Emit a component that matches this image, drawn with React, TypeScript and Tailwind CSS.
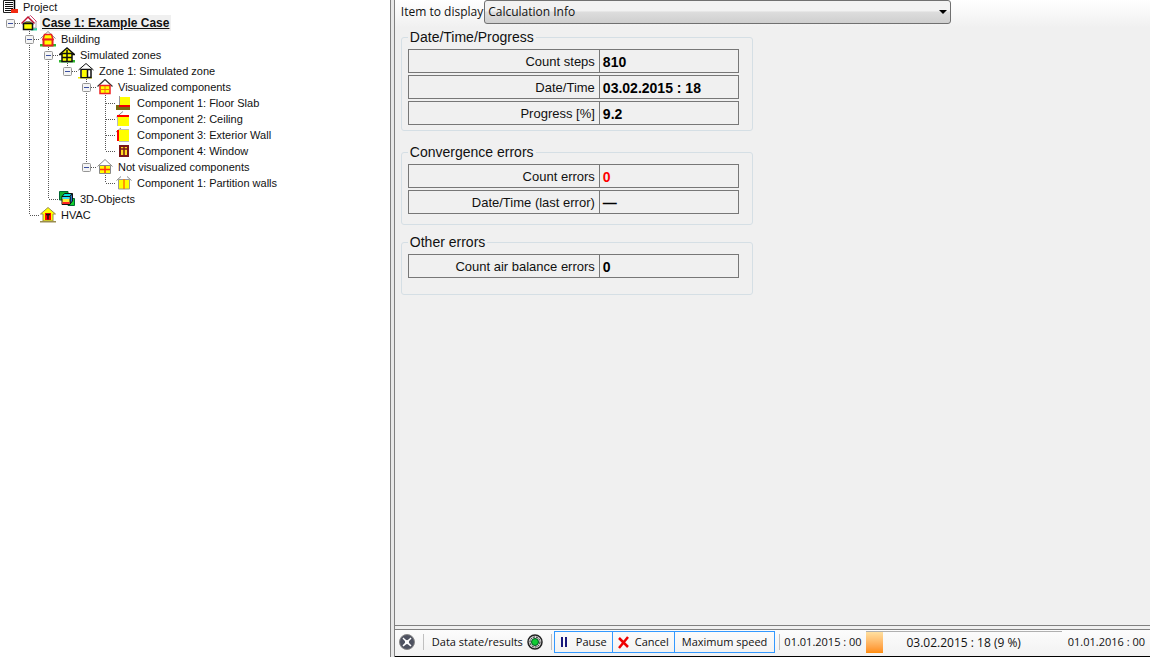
import type { ReactNode } from "react";

// Every tree icon is drawn on a 16x16 pixel grid
const icons: Record<string, ReactNode> = {
  project: (
    <>
      <path d="M0.500 0.500H11.500V12.500H0.500Z" fill="#fff" stroke="#222" />
      <path d="M2 2.500H10M2 4.500H10M2 6.500H10M2 8.500H10M2 10.500H8" stroke="#111" />
      <path d="M11.500 0V9" stroke="#000" strokeWidth="1.500" />
      <path d="M8 9H15V13H8Z" fill="#f22b12" />
    </>
  ),
  case: (
    <>
      <path d="M10 15.500H16V13H10Z" fill="#35d6a5" />
      <path d="M6.500 3L9.500 0.500L15 6V13H11V8Z" fill="#fff" stroke="#b0a0a8" />
      <path d="M9.500 0.500L15.500 6.500" stroke="#d04070" />
      <path d="M0.500 8.500L7 2L13.500 8.500" fill="#fff" stroke="#c01030" strokeWidth="1.500" />
      <path d="M2 9.500L4.500 7H9.500L12 9.500" fill="#ff0" stroke="#111" />
      <path d="M2.500 8.500H11.500V14.500H2.500Z" fill="#ff0" stroke="#111" strokeWidth="1.500" />
    </>
  ),
  building: (
    <>
      <path d="M0 13H16V15.500H0Z" fill="#2fb82f" />
      <path d="M0.500 7.500L8 0.500L15.500 7.500" fill="#fff" stroke="#888" />
      <path d="M3 8.500L4.500 3.500H11.500L13 8.500Z" fill="#ff0" stroke="#e82020" strokeWidth="1.500" />
      <path d="M3.500 8.500H12.500V14.500H3.500Z" fill="#ff0" stroke="#e82020" strokeWidth="2" />
    </>
  ),
  zones: (
    <>
      <path d="M0 13H16V15.500H0Z" fill="#2fb82f" />
      <path d="M0.500 7.500L8 1L15.500 7.500Z" fill="#ff0" stroke="#111" strokeWidth="1.500" />
      <path d="M3 6.500H13V14.500H3Z" fill="#ff0" stroke="#111" strokeWidth="1.500" />
      <path d="M8 3V15M3 10.500H13" stroke="#111" strokeWidth="1.500" />
    </>
  ),
  zone: (
    <>
      <path d="M0 14H14V15.500H0Z" fill="#ee0" />
      <path d="M0.500 7L8 0.500L15.500 7" fill="#fff" stroke="#111" />
      <path d="M3 6.500H13V14.500H3Z" fill="#fff" stroke="#111" strokeWidth="1.500" />
      <path d="M4 7H9V14H4Z" fill="#ff0" />
      <path d="M9.500 6V14" stroke="#111" strokeWidth="1.500" />
    </>
  ),
  visualized: (
    <>
      <path d="M0.500 7.500L8 0.500L15.500 7.500" fill="#fff" stroke="#333" strokeWidth="1.200" />
      <path d="M3 6.500H13V14.500H3Z" fill="#ff0" stroke="#f02020" strokeWidth="1.500" />
      <path d="M8 7V14M3 10.500H13" stroke="#f96a10" />
    </>
  ),
  hidden: (
    <>
      <path d="M0.500 7.500L8 0.500L15.500 7.500" fill="#fff" stroke="#888" />
      <path d="M2.500 6.500H13.500V14.500H2.500Z" fill="#ff0" stroke="#888" />
      <path d="M8 7V14M3 10.500H13" stroke="#f31" strokeWidth="1.500" />
    </>
  ),
  floor: (
    <>
      <path d="M3.500 1V11" stroke="#999" />
      <path d="M0 10H14V15H0Z" fill="#7a6a10" />
      <path d="M4 2H14V10H4Z" fill="#ff0" />
      <path d="M3 10H14V12H3Z" fill="#e00" />
    </>
  ),
  ceiling: (
    <>
      <path d="M0.500 6L7 0.500" stroke="#888" />
      <path d="M2 6H13V15H2Z" fill="#ff0" />
      <path d="M1 4H13V6H1Z" fill="#f00" />
      <path d="M1.500 6V15" stroke="#bbb" />
    </>
  ),
  wall: (
    <>
      <path d="M0 5L5 1" stroke="#888" />
      <path d="M3 3H13V14H3Z" fill="#ff0" />
      <path d="M1 3H3V14H1Z" fill="#f00" />
      <path d="M3 2.500H13M3 14.500H13" stroke="#bbb" />
    </>
  ),
  window: (
    <>
      <path d="M4 3H12V13H4Z" fill="#fd2" stroke="#7a1518" strokeWidth="2" />
      <path d="M8 3V13M4 6H12" stroke="#7a1518" strokeWidth="1.500" />
    </>
  ),
  partition: (
    <>
      <path d="M0.500 5.500L5 1.500M11 1.500L15.500 5.500" stroke="#888" />
      <path d="M2.500 4.500H13.500V14H2.500Z" fill="#ff0" stroke="#999" />
      <path d="M8 4V14" stroke="#f70" strokeWidth="1.500" />
    </>
  ),
  objects: (
    <>
      <path d="M0.500 0.500H9V9H0.500Z" fill="#10b030" stroke="#063" />
      <path d="M9 7.500H15.500V14.500H9Z" fill="#10d030" stroke="#063" />
      <path d="M3 5.500L5.500 2.500H13L11 5.500Z" fill="#0dd" stroke="#111" />
      <path d="M11 5.500L13.500 2.500V10L11 13Z" fill="#27c" stroke="#111" />
      <path d="M3 5.500H11V13.500H3Z" fill="#fe3" stroke="#111" />
      <path d="M3.500 6H10.500V8H3.500Z" fill="#3df" />
      <path d="M3.500 11H10.500V13H3.500Z" fill="#f22" />
    </>
  ),
  hvac: (
    <>
      <path d="M0 14H16V15.500H0Z" fill="#998c50" />
      <path d="M0.500 7L8 0.500L15.500 7H13V14H3V7Z" fill="#ff0" stroke="#998c50" />
      <path d="M5 6H11V13H5Z" fill="#f00" />
      <path d="M6 7.500H10M8 7V12.500" stroke="#111" strokeWidth="1.500" />
    </>
  ),
};

// Guides, one letter per indent column:
// " " empty, "|" line passing by, "t" branch, "l" last branch, "0" root box, "+" node box going on, "-" last node box
const nodes = [
  { label: "Case 1: Example Case", icon: "case", guides: "0" },
  { label: "Building", icon: "building", guides: " +" },
  { label: "Simulated zones", icon: "zones", guides: " |+" },
  { label: "Zone 1: Simulated zone", icon: "zone", guides: " ||-" },
  { label: "Visualized components", icon: "visualized", guides: " || +" },
  { label: "Component 1: Floor Slab", icon: "floor", guides: " || |t" },
  { label: "Component 2: Ceiling", icon: "ceiling", guides: " || |t" },
  { label: "Component 3: Exterior Wall", icon: "wall", guides: " || |t" },
  { label: "Component 4: Window", icon: "window", guides: " || |l" },
  { label: "Not visualized components", icon: "hidden", guides: " || -" },
  { label: "Component 1: Partition walls", icon: "partition", guides: " ||  l" },
  { label: "3D-Objects", icon: "objects", guides: " |l" },
  { label: "HVAC", icon: "hvac", guides: " l" },
];

const TreeIcon = ({ name }: { name: string }) => (
  <svg width="16" height="16" viewBox="0 0 16 16" fill="none" className="shrink-0" aria-hidden="true">
    {icons[name]}
  </svg>
);

const Guide = ({ kind }: { kind: string }) => {
  const box = "0+-".includes(kind);
  const down = "|t+".includes(kind);
  const up = "|tl+-".includes(kind);
  return (
    <svg width="19" height="16" viewBox="0 0 19 16" fill="none" className="shrink-0" aria-hidden="true">
      <g stroke="#555" strokeDasharray="1 1">
        {up && <path d="M9.500 0V8" />}
        {down && <path d="M9.500 8V16" />}
        {kind !== " " && kind !== "|" && <path d="M10 8.500H19" />}
      </g>
      {box && (
        <>
          <rect x="5.500" y="4.500" width="8" height="8" rx="1" fill="#f4f4f4" stroke="#969696" />
          <path d="M7 8.500H12" stroke="#3c50a0" />
        </>
      )}
    </svg>
  );
};

const Tree = () => (
  <nav className="w-[33.9%] shrink-0 overflow-hidden bg-white pl-px font-['Liberation_Sans',sans-serif] text-[11px] whitespace-nowrap">
    <div className="flex h-[15px] items-center gap-1 pl-0.5">
      <TreeIcon name="project" />
      <span>Project</span>
    </div>
    <ul>
      {nodes.map((node) => (
        <li key={node.label} className="flex h-4 items-center">
          {node.guides.split("").map((kind, i) => (
            <Guide key={i} kind={kind} />
          ))}
          <span className="pl-px"><TreeIcon name={node.icon} /></span>
          {node.icon === "case" ? (
            <a href="#case" className="ml-[3px] bg-[#f0f0f0] px-0.5 text-[12px] leading-4 font-bold underline">{node.label}</a>
          ) : (
            <span className="ml-[5px]">{node.label}</span>
          )}
        </li>
      ))}
    </ul>
  </nav>
);

type Row = { label: string; value: string; className?: string };

const Group = ({ title, rows, className }: { title: string; rows: Row[]; className: string }) => (
  <fieldset className={`w-[352px] rounded-[3px] border border-[#d5dfe5] px-1.5 pt-1 ${className}`}>
    <legend className="px-0.5 text-[14px] leading-4">{title}</legend>
    <table className="w-[331px] border-separate border-spacing-0">
      <tbody>
        {rows.map((row) => (
          <tr key={row.label}>
            <th scope="row" className="w-[192px] pb-0.5 font-normal">
              <div className="h-6 border border-[#777] pr-1 text-right text-[13px] leading-6">{row.label}</div>
            </th>
            <td className="pb-0.5">
              <div className={`h-6 border border-l-0 border-[#777] pl-[3px] text-[14px] leading-6 font-bold ${row.className ?? "text-black"}`}>{row.value}</div>
            </td>
          </tr>
        ))}
      </tbody>
    </table>
  </fieldset>
);

const App = () => {
  return (
    <div className="flex h-screen overflow-hidden bg-[#f0f0f0] text-[#111]">
      <Tree />
      <div className="w-[5px] shrink-0 border-x border-[#808080] bg-[#e8e8e8]" />
      <main className="flex min-w-0 flex-1 flex-col">
        <section className="flex-1 border-b border-[#808080] bg-linear-to-b from-white to-[#f0f0f0] to-[28px] pl-1.5 font-['Liberation_Sans',sans-serif]">
          <div className="flex h-6 items-center gap-px font-['Open_Sans',sans-serif] text-[12px]">
            <label htmlFor="item">Item to display</label>
            <div className="relative w-[467px]">
              <select id="item" className="block h-6 w-full appearance-none rounded-[3px] border border-[#707070] bg-linear-to-b from-[#f2f2f2] from-45% via-[#dddddd] via-50% to-[#cfcfcf] px-[3px]">
                <option>Calculation Info</option>
              </select>
              <svg width="8" height="4" viewBox="0 0 8 4" className="pointer-events-none absolute top-2.5 right-1" aria-hidden="true">
                <path d="M0 0H8L4 4Z" fill="#000" />
              </svg>
            </div>
          </div>
          <Group
            title="Date/Time/Progress"
            className="mt-[5px] pb-[3px]"
            rows={[
              { label: "Count steps", value: "810" },
              { label: "Date/Time", value: "03.02.2015 : 18" },
              { label: "Progress [%]", value: "9.2" },
            ]}
          />
          <Group
            title="Convergence errors"
            className="mt-[13px] pb-2"
            rows={[
              { label: "Count errors", value: "0", className: "text-[#f00]" },
              { label: "Date/Time (last error)", value: "—" },
            ]}
          />
          <Group
            title="Other errors"
            className="mt-[9px] pb-3.5"
            rows={[{ label: "Count air balance errors", value: "0" }]}
          />
        </section>
        <footer className="mt-[3px] flex h-7 items-center border-y border-t-[#808080] border-b-black bg-linear-to-b from-[#fcfcfc] to-[#f2f2f2] pb-0.5 pl-1 font-['Open_Sans',sans-serif] text-[11px] whitespace-nowrap">
          <button type="button" aria-label="Close">
            <svg width="16" height="16" viewBox="0 0 16 16" className="block">
              <circle cx="8" cy="8" r="7.500" fill="#4e5260" stroke="#888" />
              <path d="M4.500 3.500C8 7 8 7 11.500 3.500L12.500 4.500C9 8 9 8 12.500 11.500L11.500 12.500C8 9 8 9 4.500 12.500L3.500 11.500C7 8 7 8 3.500 4.500Z" fill="#fff" />
            </svg>
          </button>
          <span className="mr-2 ml-2 h-4 w-px bg-[#c0c0c0]" />
          <button type="button" className="flex items-center gap-1">
            Data state/results
            <svg width="16" height="16" viewBox="0 0 16 16" fill="none" aria-hidden="true">
              <circle cx="8" cy="8" r="7" fill="#ddd" stroke="#222" strokeWidth="1.500" />
              <circle cx="8" cy="8" r="5" stroke="#222" strokeDasharray="2 1" />
              <circle cx="8" cy="8" r="3.500" fill="#1c3" stroke="#052" />
            </svg>
          </button>
          <span className="mr-0.5 ml-2 h-4 w-px bg-[#c0c0c0]" />
          <div className="flex h-[22px]">
            <button type="button" className="flex items-center gap-1 border border-[#3399ff] px-[5px]">
              <svg width="12" height="12" viewBox="0 0 12 12" aria-hidden="true">
                <path d="M1 1H3V11H1ZM5 1H7V11H5Z" fill="#18187c" />
              </svg>
              Pause
            </button>
            <button type="button" className="flex items-center gap-1 border border-l-0 border-[#3399ff] px-[5px]">
              <svg width="13" height="13" viewBox="0 0 13 13" aria-hidden="true">
                <path d="M1 2L10 11M10 1L1 12" stroke="#e00" strokeWidth="2.500" />
              </svg>
              Cancel
            </button>
            <button type="button" className="border border-l-0 border-[#3399ff] px-[7px]">Maximum speed</button>
          </div>
          <span className="mx-1 h-4 w-px bg-[#c0c0c0]" />
          <span>01.01.2015 : 00</span>
          <div className="relative ml-1 h-[22px] flex-1 border-t border-[#b0b0b0]">
            <div className="h-full w-[9%] bg-linear-to-b from-[#ffe0a0] to-[#ff8c00]" />
            <span className="absolute inset-0 text-center text-[12px] leading-[22px]">03.02.2015 : 18 (9 %)</span>
          </div>
          <span className="mr-[5px] ml-1.5">01.01.2016 : 00</span>
        </footer>
      </main>
    </div>
  );
};

export default App;
